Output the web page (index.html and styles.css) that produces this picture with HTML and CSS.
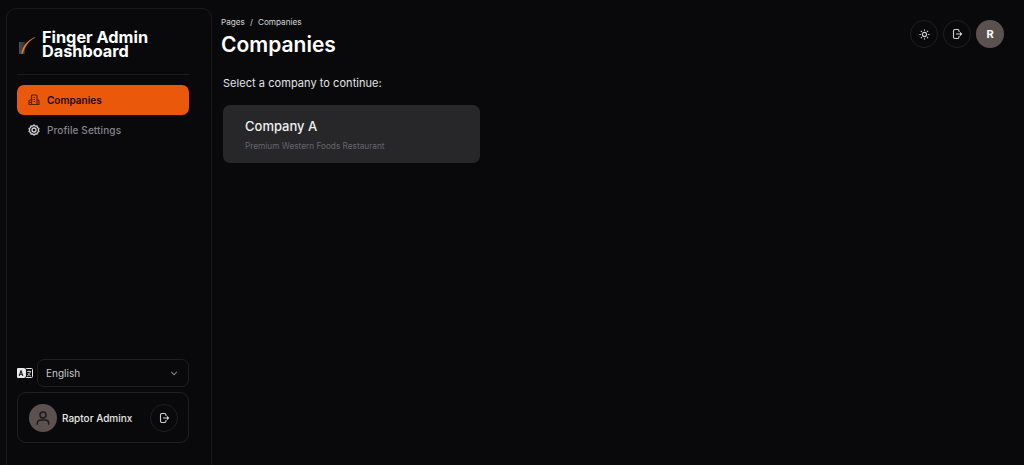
FILE: index.html
```html
<!DOCTYPE html>
<html lang="en">
<head>
    <meta charset="UTF-8">
    <meta name="viewport" content="width=device-width, initial-scale=1.0">
    <title>Finger Admin Dashboard</title>
    <link rel="stylesheet" href="styles.css">
</head>
<body>
    <div class="app-wrap">
        <aside class="sidebar">
            <div class="brand">
                <svg class="brand-logo" width="20" height="20" viewBox="0 0 20 20">
                    <defs>
                        <linearGradient id="logoFade" x1="0" y1="0" x2="1" y2="0">
                            <stop offset="0" stop-color="#505052"/>
                            <stop offset="1" stop-color="#2a2a2c"/>
                        </linearGradient>
                    </defs>
                    <rect x="1" y="6" width="6" height="12" fill="url(#logoFade)"/>
                    <path d="M3.600 17.500C4.500 10.500 9 4.500 17 1.500C11 4.500 6.500 10.500 4.700 17.500Z" fill="#e0822f" stroke="#e0822f" stroke-width=".4"/>
                </svg>
                <div class="brand-name">Finger Admin Dashboard</div>
            </div>
            <nav class="nav">
                <a class="nav-item active">
                    <svg width="12" height="12" viewBox="0 0 24 24" fill="none" stroke="currentColor" stroke-width="2.400">
                        <path d="M7 21V4a2 2 0 0 1 2-2h7a2 2 0 0 1 2 2v17"/>
                        <path d="M2 21v-7a2 2 0 0 1 2-2h5M18 12h2a2 2 0 0 1 2 2v7M1 21h22"/>
                        <path d="M11 7h3M11 11h3M11 15h3M3 17h4"/>
                    </svg>
                    Companies
                </a>
                <a class="nav-item">
                    <svg width="12" height="12" viewBox="0 0 24 24" fill="none" stroke="currentColor" stroke-width="2.600">
                        <path d="M12 2l2.500 2.300 3.400-.3 1 3.300 2.900 1.800L20.500 12l1.300 2.900-2.900 1.800-1 3.300-3.400-.3L12 22l-2.500-2.300-3.400.3-1-3.300-2.900-1.800L3.500 12 2.200 9.100l2.900-1.800 1-3.300 3.400.3z"/>
                        <circle cx="12" cy="12" r="4"/>
                    </svg>
                    Profile Settings
                </a>
            </nav>
            <div class="sidebar-bottom">
                <div class="lang-row">
                    <svg class="lang-icon" width="16" height="10" viewBox="0 0 16 10">
                        <rect width="8" height="10" rx="1" fill="#e8e8e8"/>
                        <rect x="8.500" y=".5" width="7" height="9" rx="1" fill="none" stroke="#e8e8e8"/>
                        <path d="M2.200 8L4 2.500 5.800 8M3 6.300h2" fill="none" stroke="#09090b"/>
                        <path d="M10 3.500h4M12 2.500v1M13.500 3.500C13 6 11.500 7.500 10 8M11 5c.5 1.500 1.500 2.500 3 3" fill="none" stroke="#e8e8e8" stroke-width=".8"/>
                    </svg>
                    <div class="lang-select">
                        <span>English</span>
                        <svg width="10" height="10" viewBox="0 0 24 24" fill="none" stroke="#8a8a90" stroke-width="2.500"><path d="M5 9l7 7 7-7"/></svg>
                    </div>
                </div>
                <div class="user-card">
                    <div class="user-avatar">
                        <svg width="16" height="16" viewBox="0 0 24 24" fill="none" stroke="#1c1a1a" stroke-width="2.200">
                            <circle cx="12" cy="7.500" r="4.500"/>
                            <path d="M3.500 22v-2a5 5 0 0 1 5-5h7a5 5 0 0 1 5 5v2"/>
                        </svg>
                    </div>
                    <div class="user-name">Raptor Adminx</div>
                    <button class="icon-btn">
                        <svg width="12" height="12" viewBox="0 0 24 24" fill="none" stroke="#d4d4d8" stroke-width="2.200">
                            <path d="M16 8V6a3 3 0 0 0-3-3H8a3 3 0 0 0-3 3v12a3 3 0 0 0 3 3h5a3 3 0 0 0 3-3v-2"/>
                            <path d="M10 12h11M18 9l3 3-3 3"/>
                        </svg>
                    </button>
                </div>
            </div>
        </aside>
        <main class="content">
            <header class="topbar">
                <div>
                    <div class="breadcrumb"><span>Pages</span><span>/</span><span>Companies</span></div>
                    <h1 class="page-title">Companies</h1>
                </div>
                <div class="top-actions">
                    <button class="icon-btn">
                        <svg width="11" height="11" viewBox="0 0 24 24" fill="none" stroke="#d4d4d8" stroke-width="2.500">
                            <circle cx="12" cy="12" r="4.500"/>
                            <path d="M12 1v3M12 20v3M1 12h3M20 12h3M4.200 4.200l2.100 2.100M17.700 17.700l2.100 2.100M4.200 19.800l2.100-2.100M17.700 6.300l2.100-2.100"/>
                        </svg>
                    </button>
                    <button class="icon-btn">
                        <svg width="12" height="12" viewBox="0 0 24 24" fill="none" stroke="#d4d4d8" stroke-width="2.200">
                            <path d="M16 8V6a3 3 0 0 0-3-3H8a3 3 0 0 0-3 3v12a3 3 0 0 0 3 3h5a3 3 0 0 0 3-3v-2"/>
                            <path d="M10 12h11M18 9l3 3-3 3"/>
                        </svg>
                    </button>
                    <div class="top-avatar">R</div>
                </div>
            </header>
            <section class="companies">
                <p class="select-label">Select a company to continue:</p>
                <div class="company-card">
                    <div class="company-name">Company A</div>
                    <div class="company-desc">Premium Western Foods Restaurant</div>
                </div>
            </section>
        </main>
    </div>
</body>
</html>
```

FILE: styles.css
```css
* {
  margin: 0;
  padding: 0;
  box-sizing: border-box;
}

html, body {
  height: 100%;
  overflow: hidden;
}

body {
  font-family: Inter, "Liberation Sans", sans-serif;
  background-color: #09090b;
  color: #fff;
}

.app-wrap {
  display: flex;
  height: 100%;
  padding: 8px 0 0 6px;
}

/* sidebar runs off the bottom of the window */
.sidebar {
  display: flex;
  flex-direction: column;
  flex-shrink: 0;
  width: 206px;
  height: 477px;
  padding: 19px 22px 41px 10px;
  border: 1px solid #1a1a1d;
  border-radius: 10px;
}

.brand {
  display: flex;
  align-items: center;
  gap: 4px;
  height: 47px;
  padding-left: 1px;
  padding-bottom: 14px;
  border-bottom: 1px solid #1a1a1d;
}

.brand-logo {
  flex-shrink: 0;
  margin-top: 4px;
}

.brand-name {
  width: 130px;
  font-size: 16.300px;
  font-weight: 700;
  line-height: 14px;
}

.nav {
  display: flex;
  flex-direction: column;
  margin-top: 10px;
}

.nav-item {
  display: flex;
  align-items: center;
  gap: 7px;
  height: 30px;
  padding-left: 11px;
  border-radius: 7px;
  font-size: 10px;
  font-weight: 500;
  letter-spacing: .1px;
  color: #85858b;
}

.nav-item svg {
  color: #d4d4d8;
}

.nav-item.active {
  background-color: #ea580c;
  color: #1a0b02;
  font-weight: 600;
  letter-spacing: 0;
}

.nav-item.active svg {
  color: #5b2306;
}

.sidebar-bottom {
  display: flex;
  flex-direction: column;
  gap: 5px;
  margin-top: auto;
}

.lang-row {
  display: flex;
  align-items: center;
  gap: 4px;
}

.lang-icon {
  flex-shrink: 0;
}

.lang-select {
  flex: 1;
  display: flex;
  align-items: center;
  justify-content: space-between;
  height: 28px;
  padding: 0 9px 0 8px;
  border: 1px solid #1f1f22;
  border-radius: 7px;
  font-size: 10px;
  color: #c8c8cc;
}

.user-card {
  display: flex;
  align-items: center;
  height: 51px;
  padding: 0 10px 0 11px;
  border: 1px solid #1f1f22;
  border-radius: 9px;
}

.user-avatar {
  display: flex;
  align-items: center;
  justify-content: center;
  width: 28px;
  height: 28px;
  border-radius: 50%;
  background-color: #5b5250;
}

.user-name {
  flex: 1;
  margin-left: 5px;
  font-size: 10px;
  font-weight: 500;
  color: #e8e8e8;
}

.icon-btn {
  display: flex;
  align-items: center;
  justify-content: center;
  width: 28px;
  height: 28px;
  border: 1px solid #1f1f22;
  border-radius: 50%;
  background: none;
}

.content {
  flex: 1;
  padding: 0 20px 0 9px;
}

.topbar {
  display: flex;
  justify-content: space-between;
  align-items: flex-start;
  padding-top: 9px;
}

.breadcrumb {
  display: flex;
  gap: 5px;
  font-size: 8.200px;
  line-height: 10px;
  color: #d4d4d8;
}

.page-title {
  margin-top: 6px;
  font-size: 21px;
  font-weight: 600;
  line-height: 24px;
}

.top-actions {
  display: flex;
  gap: 5px;
  padding-top: 3px;
}

.top-avatar {
  display: flex;
  align-items: center;
  justify-content: center;
  width: 28px;
  height: 28px;
  border-radius: 50%;
  background-color: #5b5250;
  font-size: 11px;
  font-weight: 700;
}

.companies {
  margin-left: 2px;
}

.select-label {
  margin-top: 18px;
  font-size: 11px;
  letter-spacing: .05px;
  line-height: 16px;
  color: #e4e4e7;
}

.company-card {
  width: 257px;
  height: 58px;
  margin-top: 14px;
  padding: 12px 22px;
  border-radius: 7px;
  background-color: #27272a;
}

.company-name {
  font-size: 13px;
  font-weight: 500;
  line-height: 18px;
  color: #f0f0f0;
}

.company-desc {
  margin-top: 6px;
  font-size: 8.250px;
  line-height: 11px;
  color: #66666b;
}
```
